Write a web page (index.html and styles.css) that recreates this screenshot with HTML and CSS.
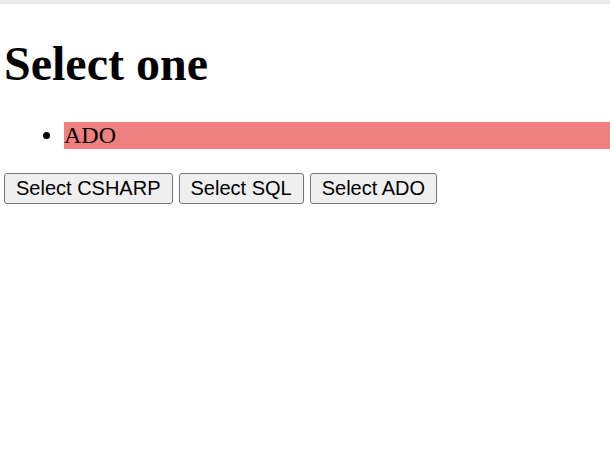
FILE: index.html
```html
<!DOCTYPE html>
<html>
<head>
<meta charset="utf-8">
<link rel="stylesheet" href="styles.css">
</head>
<body>
<div class="topbar"></div>
<div class="page">
  <h1 class="title">Select one</h1>
  <ul class="list">
    <li class="item selected">ADO</li>
  </ul>
  <div class="actions">
    <button class="btn">Select CSHARP</button>
    <button class="btn">Select SQL</button>
    <button class="btn">Select ADO</button>
  </div>
</div>
</body>
</html>
```

FILE: styles.css
```css
html, body {
  margin: 0;
  padding: 0;
  background: #ffffff;
  overflow: hidden;
}
body {
  font-family: "Liberation Serif", "Times New Roman", serif;
  color: #000;
}
.topbar {
  height: 3px;
  background: #ececec;
  border-bottom: 1px solid #e4e4e4;
}
.page {
  padding: 0 0 0 4px;
}
.title {
  font-size: 48px;
  font-weight: bold;
  line-height: 55px;
  margin: 32px 0 31px 0;
}
.list {
  margin: 0 0 24px 0;
  padding-left: 60px;
  font-size: 24px;
  line-height: 27px;
}
.item.selected {
  background: #f08080;
}
.actions {
  display: flex;
  gap: 6px;
}
.btn {
  font-family: "Liberation Sans", Arial, sans-serif;
  font-size: 20px;
  line-height: 23px;
  color: #000;
  background: #efefef;
  border: 1px solid #767676;
  border-radius: 3px;
  padding: 3px 11px;
  margin: 0;
}
```
